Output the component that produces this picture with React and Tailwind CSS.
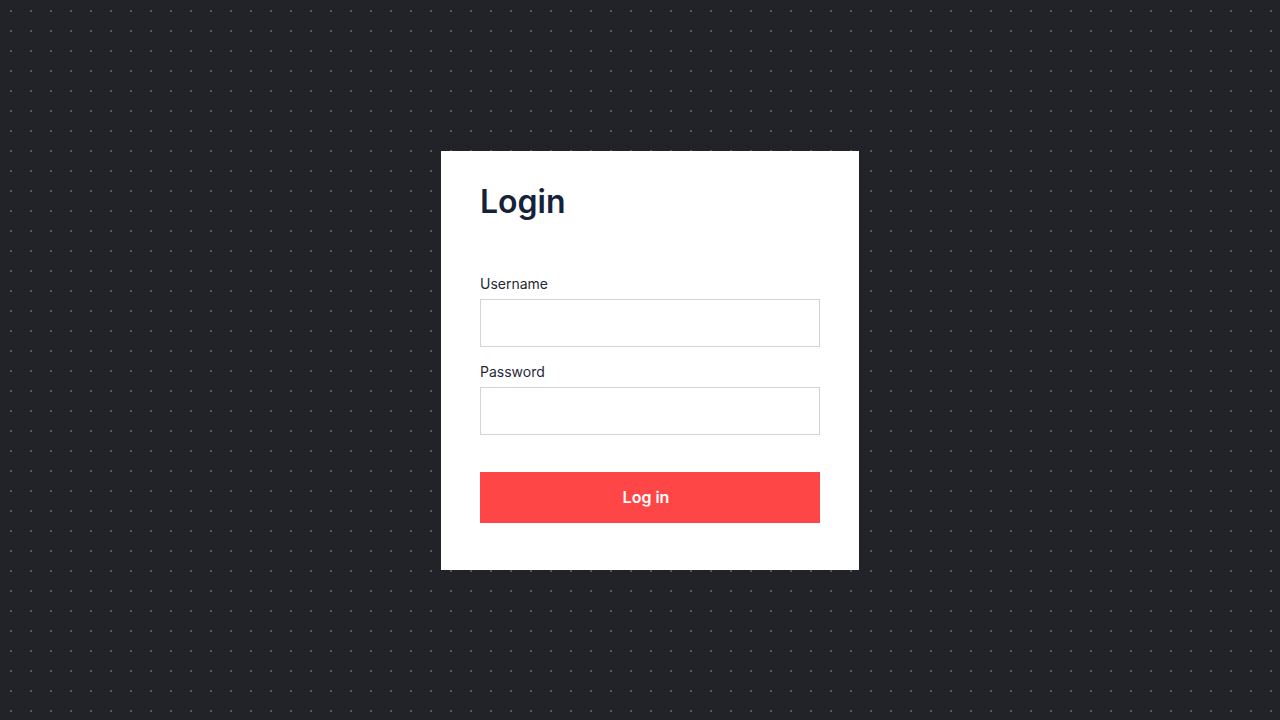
export default function App() {
  return (
    <div className="min-h-screen w-full bg-[#212328] bg-[radial-gradient(circle_at_11px_11px,#555966_1.3px,transparent_1.5px)] bg-[size:20px_20px] flex items-center justify-center pl-5 font-['Inter',sans-serif]">
      <div className="w-[418px] bg-white px-[39px] pt-[31px] pb-[47px]">
        <h1 className="text-[32px] leading-[40px] font-semibold text-[#15233a]">Login</h1>

        <form className="mt-[52px]" onSubmit={(e) => e.preventDefault()}>
          <label className="block text-sm leading-5 text-[#1f2937]">Username</label>
          <input
            type="text"
            className="mt-[5px] block w-full h-12 border border-[#d1d5db] px-3 text-sm focus:outline-none"
          />

          <label className="block mt-[15px] text-sm leading-5 text-[#1f2937]">Password</label>
          <input
            type="password"
            className="mt-[5px] block w-full h-12 border border-[#d1d5db] px-3 text-sm focus:outline-none"
          />

          <button
            type="submit"
            className="mt-[37px] w-full h-[51px] bg-[#ff4646] pr-2 text-white text-base font-semibold"
          >
            Log in
          </button>
        </form>
      </div>
    </div>
  );
}
